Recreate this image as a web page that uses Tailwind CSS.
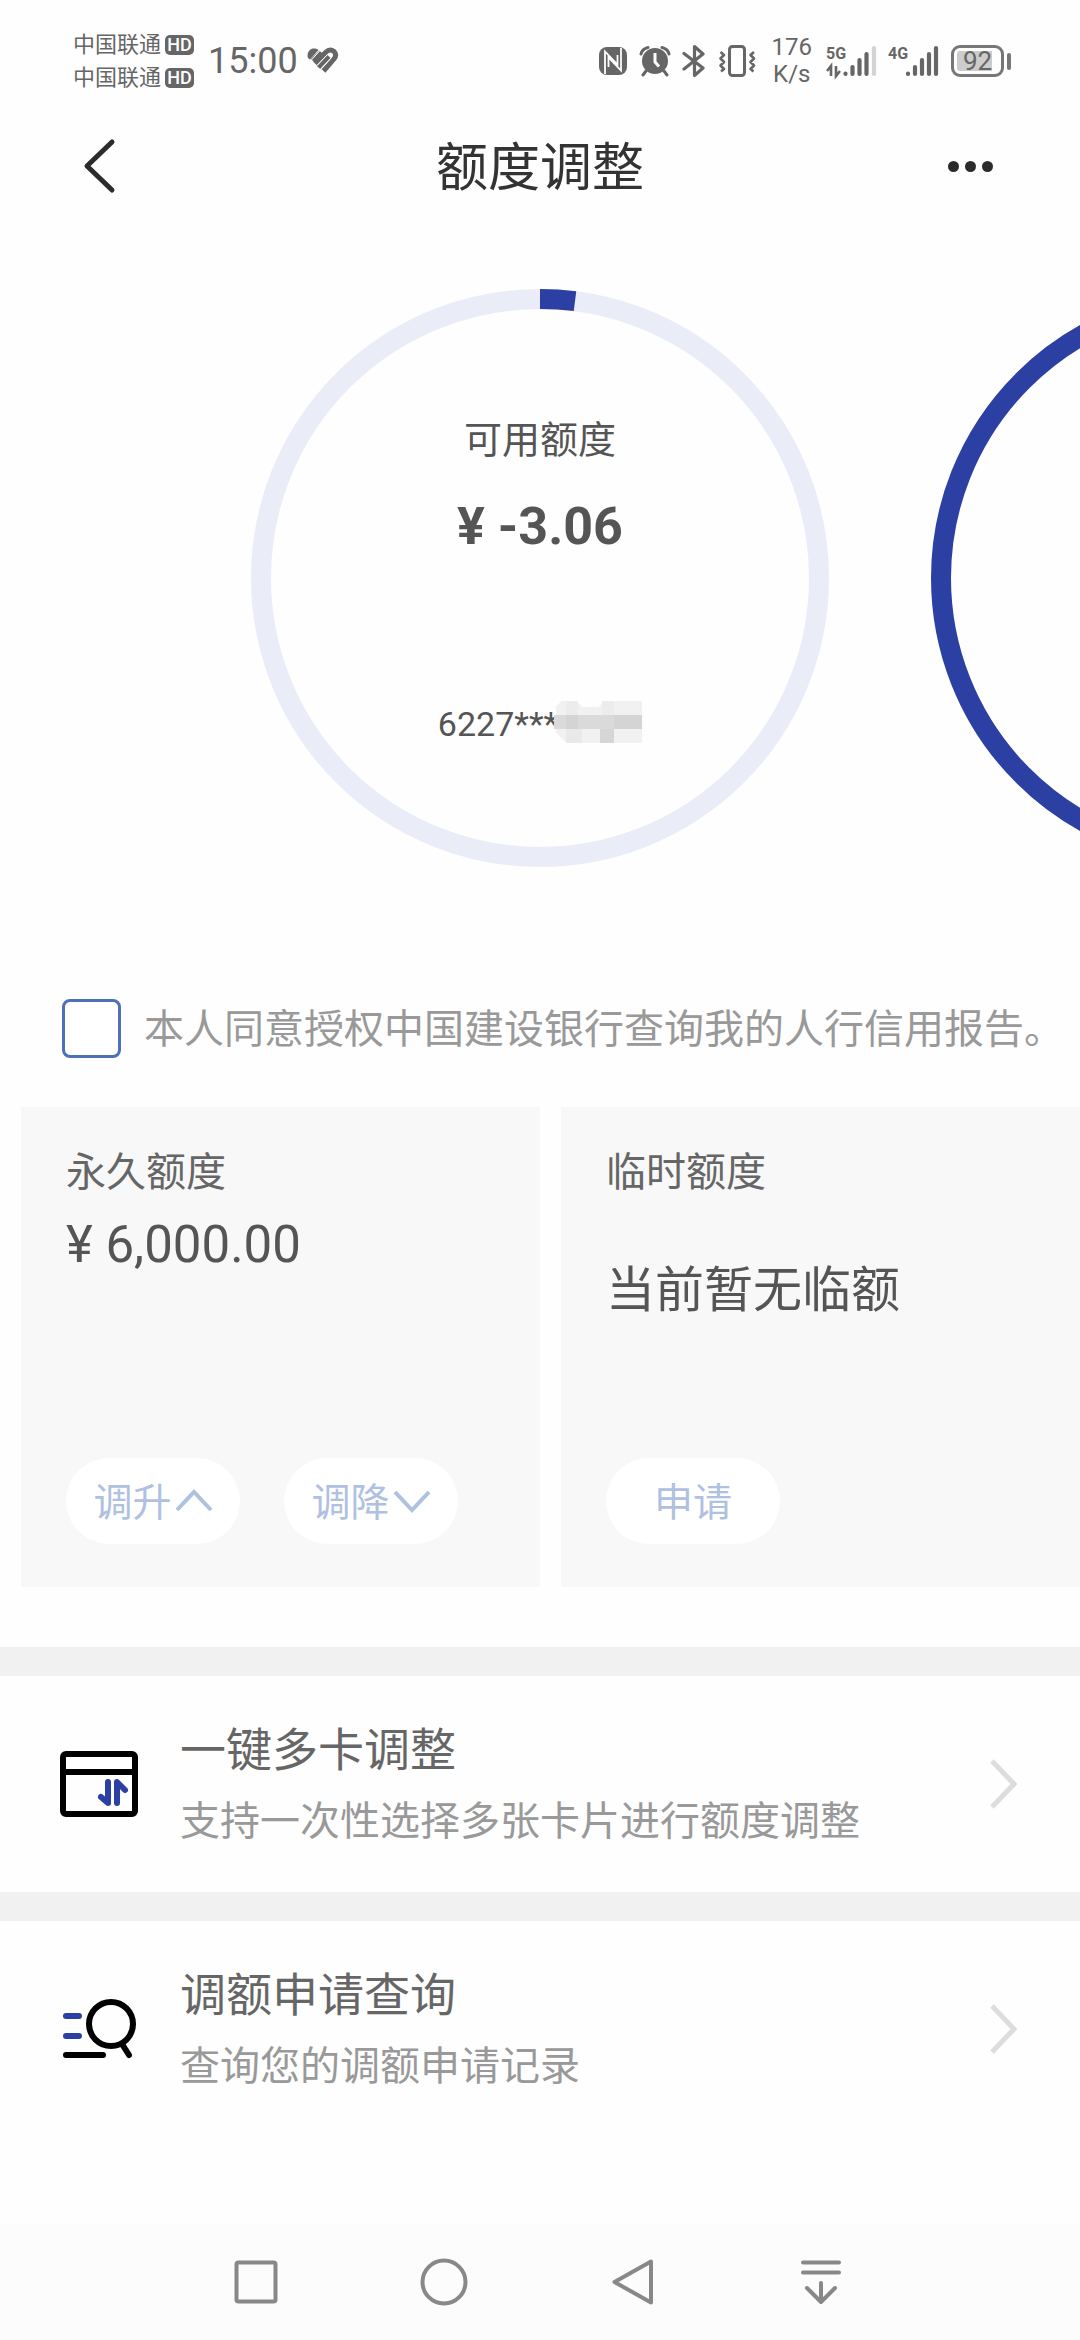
<!DOCTYPE html>
<html lang="zh-CN">
<head>
<meta charset="utf-8">
<meta name="viewport" content="width=device-width, initial-scale=1">
<title>额度调整</title>
<script src="https://cdn.jsdelivr.net/npm/@tailwindcss/browser@4"></script>
</head>
<body class="bg-[#fefefe] font-['Roboto','Noto_Sans_CJK_SC',sans-serif] text-[#555]">
<div class="flex min-h-screen flex-col overflow-hidden">

  <!-- Status bar -->
  <div class="flex h-[122px] items-center justify-between pr-[69px] pl-[73px] text-[#666]">
    <div class="flex items-center">
      <div class="flex flex-col gap-[5px] text-[22px] leading-7">
        <div class="flex items-center gap-1">
          <span>中国联通</span>
          <span class="flex h-5 w-[29px] items-center justify-center rounded-[5px] bg-[#666] text-[18px] font-medium text-white">HD</span>
        </div>
        <div class="flex items-center gap-1">
          <span>中国联通</span>
          <span class="flex h-5 w-[29px] items-center justify-center rounded-[5px] bg-[#666] text-[18px] font-medium text-white">HD</span>
        </div>
      </div>
      <span class="ml-[14px] text-[36px] leading-10">15:00</span>
      <svg class="ml-2 h-[28px] w-[34px]" viewBox="0 0 34 28">
        <path d="M1.500 9 C1.500 4 4.500 1.500 8 1.500 C10 1.500 11.500 2 12.500 3 L4 12.500 C2.300 11.500 1.500 10.500 1.500 9 Z" fill="#666"/>
        <path d="M9 16.500 L19.500 5.500 C22 3 25 2 28 4.500 C30.500 7 30 9.500 28 12 L17.500 24" fill="none" stroke="#666" stroke-width="5"/>
        <path d="M6.500 13.500 L15 5 M12.500 20.500 L23 9.500" fill="none" stroke="#666" stroke-width="4.500"/>
        <path d="M4.500 14 L14.500 3 M11 18.500 L21.500 7.500 M14.500 22.500 L25.500 10.500" fill="none" stroke="#fefefe" stroke-width="1"/>
      </svg>
    </div>
    <div class="flex items-center">
      <svg class="h-[30px] w-[30px]" viewBox="0 0 30 30">
        <rect x="1" y="1" width="28" height="28" rx="8" fill="#666"/>
        <path d="M7 28 V5.500 L19.500 18.500 V9 M10.500 21 V11.500 L23 24.500 V2" fill="none" stroke="#fefefe" stroke-width="1.800"/>
      </svg>
      <svg class="ml-[11px] h-[32px] w-[32px]" viewBox="0 0 32 32">
        <circle cx="16" cy="16" r="13" fill="#666"/>
        <path d="M2 9 Q3 4 9 2.500 M30 9 Q29 4 23 2.500 M7 26 L4 30 M25 26 L28 30" stroke="#666" stroke-width="3" fill="none" stroke-linecap="round"/>
        <path d="M16 8 V17 L20 21.500" stroke="#fefefe" stroke-width="3" fill="none"/>
      </svg>
      <svg class="ml-[11px] h-[34px] w-[24px]" viewBox="0 0 24 34">
        <path d="M2 9.500 L21 24 L12.500 31.500 V2.500 L21 10 L2 25" fill="none" stroke="#666" stroke-width="3.200" stroke-linecap="round" stroke-linejoin="round"/>
      </svg>
      <svg class="ml-[11px] h-[34px] w-[40px]" viewBox="0 0 40 34">
        <rect x="12.500" y="2.500" width="15" height="29" rx="3" fill="none" stroke="#666" stroke-width="3"/>
        <path d="M3.500 8 L7 11 L3.500 14.500 L7 18 L3.500 21.500 L7 25 L4 27.500 M37 8 L33.500 11 L37 14.500 L33.500 18 L37 21.500 L33.500 25 L36.500 27.500" fill="none" stroke="#666" stroke-width="2.600" stroke-linejoin="round"/>
      </svg>
      <span class="ml-[15px] text-center text-[24px] leading-[27px]">176<br>K/s</span>
      <svg class="ml-[14px] h-[44px] w-[52px]" viewBox="0 -6 52 44">
        <text x="0" y="14" font-family="Roboto, sans-serif" font-size="16" font-weight="700" fill="#666">5G</text>
        <path d="M1 26 L5 21 V31 M10 21 V31 L14 26" fill="none" stroke="#666" stroke-width="2.600"/>
        <path d="M19.500 28.500 V29 M26.500 22 V29 M33.500 15 V29 M40.500 9 V29" stroke="#666" stroke-width="4.200" stroke-linecap="round"/>
        <path d="M48 3 V29" stroke="#d4d4d4" stroke-width="4.200" stroke-linecap="round"/>
      </svg>
      <svg class="ml-[10px] h-[44px] w-[52px]" viewBox="0 -6 52 44">
        <text x="0" y="14" font-family="Roboto, sans-serif" font-size="16" font-weight="700" fill="#666">4G</text>
        <path d="M20 28.500 V29 M27 22 V29 M34 15 V29 M41 9 V29 M48 3 V29" stroke="#666" stroke-width="4.200" stroke-linecap="round"/>
      </svg>
      <div class="ml-[11px] flex items-center gap-[3px]">
        <div class="flex h-8 w-[53px] rounded-[9px] border-3 border-[#777] p-[3px]">
          <span class="flex flex-1 items-center justify-center rounded-[3px] bg-linear-to-r from-[#ccc] from-85% to-transparent to-85% text-[26px] leading-5">92</span>
        </div>
        <span class="h-[17px] w-1 rounded-sm bg-[#777]"></span>
      </div>
    </div>
  </div>

  <!-- Title bar -->
  <header class="flex h-[88px] items-center justify-between px-[79px] text-[#333]">
    <button type="button" aria-label="返回" class="flex w-12 justify-start">
      <svg class="h-[56px] w-[40px]" viewBox="0 0 40 56"><path d="M33 4 L8 28 L33 52" fill="none" stroke="#2b2b2b" stroke-width="5" stroke-linecap="round" stroke-linejoin="round"/></svg>
    </button>
    <h1 class="pt-[6px] text-[52px] leading-[60px]">额度调整</h1>
    <button type="button" aria-label="更多" class="flex w-12 justify-end gap-[6px] pr-2">
      <span class="size-[11px] shrink-0 rounded-full bg-[#2b2b2b]"></span>
      <span class="size-[11px] shrink-0 rounded-full bg-[#2b2b2b]"></span>
      <span class="size-[11px] shrink-0 rounded-full bg-[#2b2b2b]"></span>
    </button>
  </header>

  <main class="flex-1">
    <!-- Card carousel -->
    <section class="flex gap-[102px] overflow-hidden pt-[79px] pl-[calc(50%-289px)]">
      <div class="relative flex h-[578px] w-[578px] shrink-0 flex-col items-center pt-[126px]">
        <svg class="absolute inset-0 size-full" viewBox="0 0 578 578">
          <circle cx="289" cy="289" r="279" fill="none" stroke="#eaecf8" stroke-width="20"/>
          <path d="M289 10 A279 279 0 0 1 324 12.200" fill="none" stroke="#2c3fa3" stroke-width="20"/>
        </svg>
        <p class="text-[38px] leading-[50px]">可用额度</p>
        <p class="mt-8 text-[52px] leading-[60px] font-bold">¥ -3.06</p>
        <p class="mt-[141px] flex h-[52px] items-center text-[34px] leading-[52px]">
          <span>6227***</span>
          <svg class="-ml-1 h-[52px] w-[88px]" viewBox="0 0 88 52" shape-rendering="crispEdges">
            <path d="M2 8 L8 3 H22 L28 9 H44 L50 3 H88 V45 H12 L2 35 Z" fill="#f1f1f1"/>
            <path d="M12 3 H24 V17 H12Z M48 3 H60 V17 H48Z" fill="#ececec"/>
            <path d="M0 17 H88 V31 H0Z" fill="#dadada"/>
            <path d="M12 17 H24 V31 H12Z M60 17 H88 V31 H60Z" fill="#d4d4d4"/>
            <path d="M46 31 H60 V45 H46Z" fill="#d6d6d6"/>
            <path d="M12 31 H28 V45 H12Z" fill="#e9e9e9"/>
          </svg>
        </p>
      </div>
      <div class="h-[578px] w-[578px] shrink-0 rounded-full border-20 border-[#2c3fa3]"></div>
    </section>

    <!-- Authorisation -->
    <label class="mt-[132px] flex h-[59px] items-center pl-[62px] text-[40px] leading-[56px] whitespace-nowrap text-[#999]">
      <input type="checkbox" class="mr-[23px] size-[59px] shrink-0 appearance-none rounded-lg border-3 border-[#4d70b8] bg-white checked:bg-[#4d70b8]">
      <span class="pt-[3px]">本人同意授权中国建设银行查询我的人行信用报告。</span>
    </label>

    <!-- Limits -->
    <section class="mt-[49px] grid grid-cols-2 gap-[21px] pl-[21px]">
      <article class="flex h-[480px] flex-col items-start bg-[#f8f8f8] px-[45px] pt-[38px] pb-[43px]">
        <h2 class="text-[40px] leading-[56px] text-[#666]">永久额度</h2>
        <p class="mt-2 text-[51px] leading-[72px]">¥ 6,000.00</p>
        <div class="mt-auto flex gap-[44px]">
          <button type="button" class="flex h-[86px] w-[174px] items-center justify-center gap-[3px] rounded-full bg-white text-[39px] leading-[56px] text-[#afc1e0]"><span class="pt-1">调升</span><svg class="h-[24px] w-[38px]" viewBox="0 0 38 24"><path d="M2 21 L19 3 L36 21" fill="none" stroke="#afc1e0" stroke-width="4"/></svg></button>
          <button type="button" class="flex h-[86px] w-[174px] items-center justify-center gap-[3px] rounded-full bg-white text-[39px] leading-[56px] text-[#afc1e0]"><span class="pt-1">调降</span><svg class="h-[24px] w-[38px]" viewBox="0 0 38 24"><path d="M2 3 L19 21 L36 3" fill="none" stroke="#afc1e0" stroke-width="4"/></svg></button>
        </div>
      </article>
      <article class="flex h-[480px] flex-col items-start bg-[#f8f8f8] px-[45px] pt-[38px] pb-[43px]">
        <h2 class="text-[40px] leading-[56px] text-[#666]">临时额度</h2>
        <p class="mt-[54px] text-[49px] leading-[72px]">当前暂无临额</p>
        <button type="button" class="mt-auto flex h-[86px] w-[174px] items-center justify-center rounded-full bg-white text-[39px] leading-[56px] text-[#afc1e0]"><span class="pt-1">申请</span></button>
      </article>
    </section>

    <!-- Entries -->
    <nav class="mt-[60px]">
      <a href="#multi" class="flex h-[245px] items-center border-t-29 border-[#f1f1f1] pr-[61px] pl-[60px]">
        <svg class="mr-[42px] h-[68px] w-[78px]" viewBox="0 0 78 68">
          <rect x="3" y="4" width="72" height="60" rx="3" fill="none" stroke="#000" stroke-width="6"/>
          <path d="M3 22 H75" stroke="#000" stroke-width="6"/>
          <path d="M48 32 V53 L41 47 M57 53 V32 L65 40" fill="none" stroke="#2c3fa3" stroke-width="6" stroke-linecap="round" stroke-linejoin="round"/>
        </svg>
        <span class="flex flex-1 flex-col gap-3 pt-1">
          <span class="text-[46px] leading-[60px] text-[#666]">一键多卡调整</span>
          <span class="text-[40px] leading-[60px] text-[#999]">支持一次性选择多张卡片进行额度调整</span>
        </span>
        <svg class="h-[50px] w-[30px]" viewBox="0 0 30 50"><path d="M3 2 L25 25 L3 48" fill="none" stroke="#ddd" stroke-width="5"/></svg>
      </a>
      <a href="#records" class="flex h-[245px] items-center border-t-29 border-[#f1f1f1] pr-[61px] pl-[60px]">
        <svg class="mr-[42px] h-[68px] w-[78px]" viewBox="0 0 78 68">
          <circle cx="51" cy="29" r="22" fill="none" stroke="#000" stroke-width="6"/>
          <path d="M62 49 L69 60 M6 60 H43" stroke="#000" stroke-width="6" stroke-linecap="round"/>
          <path d="M6 21 H19 M6 41 H19" stroke="#2c3fa3" stroke-width="6" stroke-linecap="round"/>
        </svg>
        <span class="flex flex-1 flex-col gap-3 pt-1">
          <span class="text-[46px] leading-[60px] text-[#666]">调额申请查询</span>
          <span class="text-[40px] leading-[60px] text-[#999]">查询您的调额申请记录</span>
        </span>
        <svg class="h-[50px] w-[30px]" viewBox="0 0 30 50"><path d="M3 2 L25 25 L3 48" fill="none" stroke="#ddd" stroke-width="5"/></svg>
      </a>
    </nav>
  </main>

  <!-- System navigation -->
  <footer class="grid h-[116px] grid-cols-4 items-center bg-[#fcfcfc] pr-[165px] pl-[162px]">
    <button type="button" aria-label="最近任务" class="flex justify-center"><svg class="size-12" viewBox="0 0 48 48"><rect x="4.500" y="4.500" width="39" height="39" rx="2" fill="none" stroke="#888" stroke-width="4"/></svg></button>
    <button type="button" aria-label="主屏幕" class="flex justify-center"><svg class="size-12" viewBox="0 0 48 48"><circle cx="24" cy="24" r="21.500" fill="none" stroke="#888" stroke-width="4"/></svg></button>
    <button type="button" aria-label="返回" class="flex justify-center"><svg class="size-12" viewBox="0 0 48 48"><path d="M42 3.500 V44.500 L5.500 24 Z" fill="none" stroke="#888" stroke-width="4" stroke-linejoin="round"/></svg></button>
    <button type="button" aria-label="下拉通知栏" class="flex justify-center"><svg class="size-12" viewBox="0 0 48 48"><path d="M6 4.500 H42 M6 14.500 H42 M24 25 V44 M10 30 L24 44 L38 30" fill="none" stroke="#888" stroke-width="4" stroke-linecap="round" stroke-linejoin="round"/></svg></button>
  </footer>
</div>
</body>
</html>
